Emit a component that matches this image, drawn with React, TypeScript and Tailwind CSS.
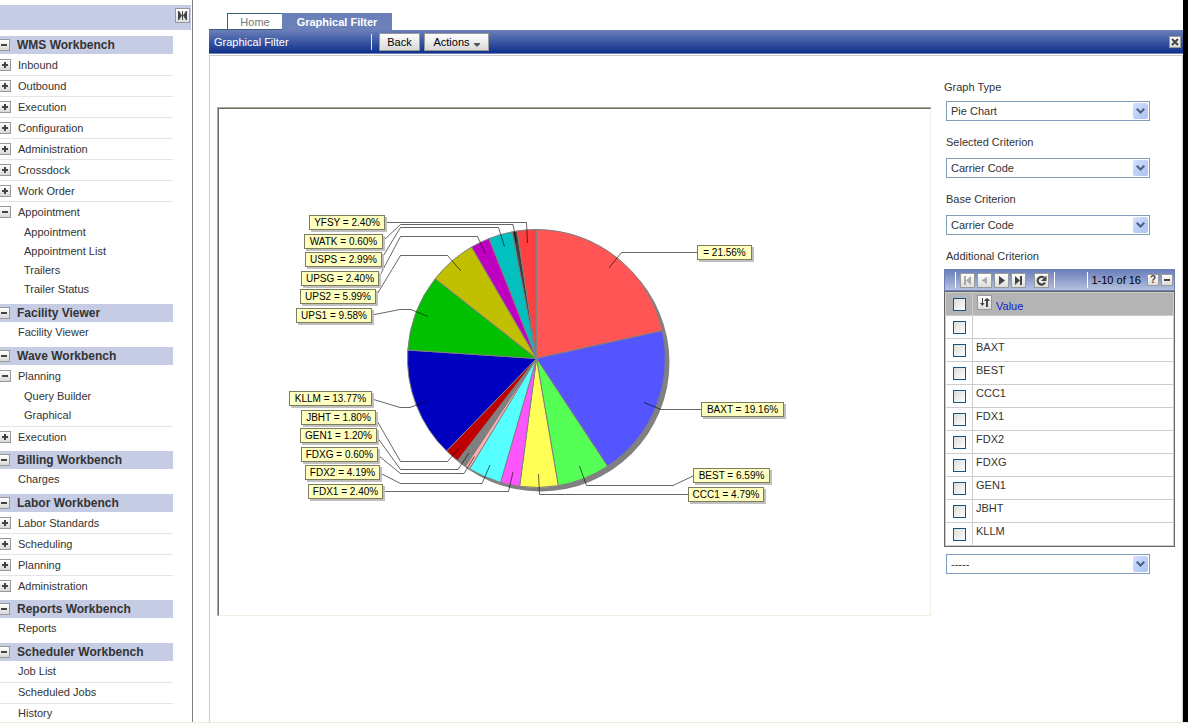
import React, { useState } from "react";
import clsx from "clsx";

type NavItem = { label: string; leaf?: boolean; children?: string[] };
type NavSection = { title: string; items: NavItem[] };

const sections: NavSection[] = [
  {
    title: "WMS Workbench",
    items: [
      { label: "Inbound" },
      { label: "Outbound" },
      { label: "Execution" },
      { label: "Configuration" },
      { label: "Administration" },
      { label: "Crossdock" },
      { label: "Work Order" },
      {
        label: "Appointment",
        children: ["Appointment", "Appointment List", "Trailers", "Trailer Status"],
      },
    ],
  },
  { title: "Facility Viewer", items: [{ label: "Facility Viewer", leaf: true }] },
  {
    title: "Wave Workbench",
    items: [
      { label: "Planning", children: ["Query Builder", "Graphical"] },
      { label: "Execution" },
    ],
  },
  { title: "Billing Workbench", items: [{ label: "Charges", leaf: true }] },
  {
    title: "Labor Workbench",
    items: [
      { label: "Labor Standards" },
      { label: "Scheduling" },
      { label: "Planning" },
      { label: "Administration" },
    ],
  },
  { title: "Reports Workbench", items: [{ label: "Reports", leaf: true }] },
  {
    title: "Scheduler Workbench",
    items: [
      { label: "Job List", leaf: true },
      { label: "Scheduled Jobs", leaf: true },
      { label: "History", leaf: true },
    ],
  },
];

type Slice = {
  name: string;
  pct: number;
  color: string;
  // label box: x, y, width
  box: [number, number, number];
  line: string;
};

const slices: Slice[] = [
  { name: "", pct: 21.56, color: "#ff5555", box: [697, 245, 55], line: "609,268 621.5,252.5 697,252.5" },
  { name: "BAXT", pct: 19.16, color: "#5555ff", box: [701, 402, 83], line: "644,402.5 661,409.5 701,409.5" },
  { name: "BEST", pct: 6.59, color: "#55ff55", box: [693, 468, 77], line: "579.5,466 586.5,485.5 673,485.5 693,476" },
  { name: "CCC1", pct: 4.79, color: "#ffff55", box: [688, 487, 76], line: "538.5,474 539.5,494.5 688,494.5" },
  { name: "FDX1", pct: 2.4, color: "#ff55ff", box: [308, 484, 75], line: "513,472 508.5,491.5 383,491.5" },
  { name: "FDX2", pct: 4.19, color: "#55ffff", box: [305, 465, 75], line: "490,465 482,483.5 400.5,483.5 380,473" },
  { name: "FDXG", pct: 0.6, color: "#ffafaf", box: [301, 447, 77], line: "474.5,456.5 464,473.5 400.5,473.5 379,456" },
  { name: "GEN1", pct: 1.2, color: "#808080", box: [300, 428, 77], line: "469,453 458,469.5 400.5,469.5 377,437" },
  { name: "JBHT", pct: 1.8, color: "#c00000", box: [301, 410, 75], line: "461,446 447.5,461.5 400.5,461.5 376,419" },
  { name: "KLLM", pct: 13.77, color: "#0000c0", box: [289, 391, 83], line: "428,400.5 410,407.5 400,407.5 372,399" },
  { name: "UPS1", pct: 9.58, color: "#00c000", box: [296, 308, 76], line: "428,316.5 411,309.5 400,309.5 372,315" },
  { name: "UPS2", pct: 5.99, color: "#c0c000", box: [300, 289, 76], line: "461,271 447.5,255.5 400.5,255.5 376,296" },
  { name: "UPSG", pct: 2.4, color: "#c000c0", box: [301, 271, 78], line: "485.5,253.5 477.5,236.5 400.5,236.5 379,277" },
  { name: "USPS", pct: 2.99, color: "#00c0c0", box: [305, 252, 77], line: "504.5,246.5 498.5,227.5 400.5,227.5 382,258" },
  { name: "WATK", pct: 0.6, color: "#404040", box: [304, 234, 79], line: "516.5,243 513,224.5 400.5,224.5 384,240" },
  { name: "YFSY", pct: 2.4, color: "#ff4040", box: [309, 215, 76], line: "527.5,243 526.5,222.5 385,222.5" },
];

const CX = 536.5;
const CY = 358.5;
const R = 129;

const point = (pct: number) => {
  const a = (pct / 100) * Math.PI * 2 - Math.PI / 2;
  return `${(CX + R * Math.cos(a)).toFixed(2)} ${(CY + R * Math.sin(a)).toFixed(2)}`;
};

const PieChart: React.FC = () => {
  const total = slices.reduce((sum, s) => sum + s.pct, 0);
  let acc = 0;
  const wedges = slices.map((s) => {
    const start = (acc / total) * 100;
    acc += s.pct;
    const end = (acc / total) * 100;
    return {
      color: s.color,
      d: `M${CX} ${CY} L${point(start)} A${R} ${R} 0 0 1 ${point(end)} Z`,
    };
  });

  return (
    <svg viewBox="219 109 711 506" className="block w-full" role="img" aria-label="Carrier Code">
      <circle cx={CX + 4} cy={CY + 4} r={R} fill="#808080" />
      {wedges.map((w) => (
        <path key={w.d} d={w.d} fill={w.color} stroke="#808080" strokeWidth={1} strokeLinejoin="round" />
      ))}
      {slices.map((s) => (
        <polyline key={s.name} points={s.line} fill="none" stroke="#000" strokeOpacity={0.6} strokeWidth={1} />
      ))}
      {slices.map((s) => {
        const [x, y, w] = s.box;
        return (
          <g key={s.name}>
            <rect x={x + 2} y={y + 2} width={w} height={15} fill="#c0c0c0" />
            <rect x={x + 0.5} y={y + 0.5} width={w - 1} height={14} fill="#ffffc0" stroke="#7d7d5e" />
            <text
              x={x + w / 2}
              y={y + 11}
              textAnchor="middle"
              fill="#000"
              className="font-['Liberation_Sans',sans-serif] text-[10px]"
            >
              {`${s.name} = ${s.pct.toFixed(2)}%`}
            </text>
          </g>
        );
      })}
    </svg>
  );
};

const Toggle: React.FC<{ open: boolean; label: string; className?: string }> = ({ open, label, className }) => (
  <button
    type="button"
    aria-label={label}
    className={clsx(
      "flex size-3 shrink-0 items-center justify-center border border-[#999] bg-linear-to-b from-white to-[#d8d8d8]",
      className
    )}
  >
    <svg viewBox="0 0 6 6" className="size-1.5 fill-[#444]">
      <rect x="0" y="2" width="6" height="2" />
      {!open && <rect x="2" y="0" width="2" height="6" />}
    </svg>
  </button>
);

const IconButton: React.FC<{
  label: string;
  small?: boolean;
  disabled?: boolean;
  children: React.ReactNode;
}> = ({ label, small, disabled, children }) => (
  <button
    type="button"
    aria-label={label}
    disabled={disabled}
    className={clsx(
      "flex shrink-0 items-center justify-center border border-[#999] bg-linear-to-b from-white to-[#dcdcdc]",
      small ? "size-3" : "size-[15px]",
      disabled ? "text-[#aaa]" : "text-[#444]"
    )}
  >
    {children}
  </button>
);

const Sidebar: React.FC = () => (
  <aside className="w-[193px] shrink-0 overflow-hidden border-r border-[#808080] pt-[5px]">
    <div className="mr-px mb-1.5 flex h-[25px] items-start justify-end bg-[#c5cce4] pt-[3px] pr-px">
      <IconButton label="Collapse menu">
        <svg viewBox="0 0 11 11" className="size-[11px] shrink-0 fill-current">
          <path d="M1 1h1l3 4.500-3 4.500H1z" />
          <rect x="5" y="1" width="1" height="9" />
          <path d="M10 1H9L6 5.500l3 4.500h1z" />
        </svg>
      </IconButton>
    </div>
    <nav className="mr-[19px]">
      {sections.map((section) => (
        <section key={section.title} className="mb-1">
          <h2 className="flex h-[18px] items-center bg-[#c5cce4] text-xs font-bold">
            <Toggle open label={section.title} className="-ml-0.5 mr-[7px]" />
            {section.title}
          </h2>
          <ul className="mt-px">
            {section.items.map((item) => (
              <li key={item.label} className="border-b border-[#e4e4e4] last:border-b-0">
                <div className="flex h-5 items-center">
                  {item.leaf ? (
                    <a href="#" className="ml-[18px] pb-0.5">
                      {item.label}
                    </a>
                  ) : (
                    <>
                      <Toggle open={!!item.children} label={`Toggle ${item.label}`} className="-ml-px mr-[7px]" />
                      <a href="#">{item.label}</a>
                    </>
                  )}
                </div>
                {item.children && (
                  <ul className="pb-0.5 pl-6">
                    {item.children.map((child) => (
                      <li key={child} className="flex h-[19px] items-center">
                        <a href="#">{child}</a>
                      </li>
                    ))}
                  </ul>
                )}
              </li>
            ))}
          </ul>
        </section>
      ))}
    </nav>
  </aside>
);

const Dropdown: React.FC<{ id: string; options: string[]; ariaLabel?: string }> = ({ id, options, ariaLabel }) => (
  <div className="relative ml-0.5 w-[204px]">
    <select
      id={id}
      aria-label={ariaLabel}
      className="block h-5 w-full appearance-none border border-[#7f9db9] bg-white pl-1 pr-5 outline-none"
    >
      {options.map((o) => (
        <option key={o}>{o}</option>
      ))}
    </select>
    <span className="pointer-events-none absolute inset-y-0.5 right-0.5 flex w-[15px] items-center justify-center rounded-xs bg-linear-to-br from-[#d5e0fd] to-[#a9c1f5]">
      <svg viewBox="0 0 9 6" className="h-1.5 w-[9px] fill-[#4d6185]">
        <path d="M0 1.500L1.500 0l3 3 3-3L9 1.500 4.500 6z" />
      </svg>
    </span>
  </div>
);

const checkboxClass =
  "block size-[13px] appearance-none border border-[#1c5180] bg-linear-to-br from-[#dcdcd7] to-white checked:from-[#21a121] checked:to-[#21a121]";

const values = ["", "BAXT", "BEST", "CCC1", "FDX1", "FDX2", "FDXG", "GEN1", "JBHT", "KLLM"];

const CriterionTable: React.FC = () => {
  const [selected, setSelected] = useState<string[]>([]);

  const toggle = (v: string) =>
    setSelected((prev) => (prev.includes(v) ? prev.filter((p) => p !== v) : [...prev, v]));

  return (
    <div>
      {/* Pager */}
      <div className="flex h-[22px] items-center border border-[#6b7fb9] bg-linear-to-b from-[#6b7fb9] to-[#b6c1e0] pr-px pl-2.5 text-black">
        <span className="mr-1 h-4 w-px bg-white" />
        <div className="flex gap-0.5">
          <IconButton label="First page" disabled>
            <svg viewBox="0 0 9 9" className="size-[9px] fill-current">
              <path d="M1 0h2v9H1zM8 0v9L3 4.500z" />
            </svg>
          </IconButton>
          <IconButton label="Previous page" disabled>
            <svg viewBox="0 0 9 9" className="size-[9px] fill-current">
              <path d="M7 1v7L1.500 4.500z" />
            </svg>
          </IconButton>
          <IconButton label="Next page">
            <svg viewBox="0 0 9 9" className="size-[9px] fill-current">
              <path d="M2 0v9l6-4.500z" />
            </svg>
          </IconButton>
          <IconButton label="Last page">
            <svg viewBox="0 0 9 9" className="size-[9px] fill-current">
              <path d="M1 0v9l5-4.500zM6 0h2v9H6z" />
            </svg>
          </IconButton>
        </div>
        <span className="ml-2">
          <IconButton label="Refresh">
            <svg viewBox="0 0 11 11" className="size-[11px] shrink-0">
              <path d="M9 7.500A3.900 3.900 0 1 1 8 2.600" fill="none" stroke="currentColor" strokeWidth="2.200" />
              <path d="M10.500 0.500v5.500H5z" fill="currentColor" />
            </svg>
          </IconButton>
        </span>
        <span className="ml-[5px] h-4 w-px bg-white" />
        <span className="mr-[3px] ml-auto h-4 w-px bg-white" />
        <span className="mr-1.5">1-10 of 16</span>
        <div className="flex gap-0.5">
          <IconButton label="Help" small>
            <span className="text-[10px] leading-none font-bold">?</span>
          </IconButton>
          <IconButton label="Minimize" small>
            <svg viewBox="0 0 6 6" className="size-1.5 fill-current">
              <rect x="0" y="2" width="6" height="2" />
            </svg>
          </IconButton>
        </div>
      </div>

      <div className="border border-[#666]">
        <table className="w-full border-collapse border border-[#ccc]">
          <thead>
            <tr className="h-[23px] bg-[#b4b4b4]">
              <th className="w-[27px] border border-[#ccc] pl-[7px]">
                <input type="checkbox" aria-label="Select all" className={checkboxClass} />
              </th>
              <th className="border border-[#ccc] p-0 pl-1 text-left font-normal">
                <div className="flex items-start gap-1">
                  <IconButton label="Sort">
                    <svg viewBox="0 0 11 11" className="size-[11px] shrink-0 fill-current">
                      <path d="M3 1h1v5h1.500L3.500 9 1 6h2z" />
                      <path d="M7 10h2V4h1.500V3L8 1 5.500 3v1H7z" />
                    </svg>
                  </IconButton>
                  <a href="#" className="pt-1 leading-[14px] text-[#1022cc]">
                    Value
                  </a>
                </div>
              </th>
            </tr>
          </thead>
          <tbody>
            {values.map((v) => (
              <tr key={v} className="h-[23px]">
                <td className="border border-[#ccc] pl-[7px]">
                  <input
                    type="checkbox"
                    id={`value-${v}`}
                    aria-label={v || "Blank value"}
                    checked={selected.includes(v)}
                    onChange={() => toggle(v)}
                    className={checkboxClass}
                  />
                </td>
                <td className="border border-[#ccc] pl-[3px] align-top leading-4">
                  <label htmlFor={`value-${v}`}>{v}</label>
                </td>
              </tr>
            ))}
          </tbody>
        </table>
      </div>
    </div>
  );
};

const App: React.FC = () => (
  <div className="flex h-screen overflow-hidden border-b border-[#ece9d8] bg-white font-['Liberation_Sans',Arial,sans-serif] text-[11px] leading-4 text-[#333]">
    <Sidebar />

    <main className="ml-4 flex min-w-0 flex-1 flex-col pt-[13px]">
      {/* Tabs */}
      <div className="flex h-[17px] shrink-0">
        <span className="w-[18px] border-b border-[#3a617c]" />
        <a
          href="#"
          className="flex w-[55px] items-center justify-center border border-r-0 border-[#3a617c] text-[#777]"
        >
          Home
        </a>
        <a href="#" className="flex w-[110px] items-center justify-center bg-[#6b7fb9] font-bold text-white">
          Graphical Filter
        </a>
      </div>

      {/* Title bar */}
      <div className="mb-px flex h-6 shrink-0 items-center border-b border-[#6b7fb9] bg-linear-to-b from-[#6b7fb9] to-[#0f2f8a] pr-0.5 pl-[5px]">
        <h1 className="w-[157px] text-white">Graphical Filter</h1>
        <span className="mr-[7px] h-4 w-px bg-[#e8e8e8]" />
        <button
          type="button"
          className="mr-1 h-[18px] w-[41px] border border-[#999] bg-linear-to-b from-white to-[#d8d8d8] text-black"
        >
          Back
        </button>
        <button
          type="button"
          className="flex h-[18px] w-[65px] items-center justify-center gap-1 border border-[#999] bg-linear-to-b from-white to-[#d8d8d8] text-black"
        >
          Actions
          <svg viewBox="0 0 6 4" className="mt-1.5 h-1 w-1.5 fill-[#555]">
            <path d="M0 0h6v1L3 4 0 1z" />
          </svg>
        </button>
        <span className="ml-auto">
          <IconButton label="Close" small>
            <svg viewBox="0 0 8 8" className="size-2 fill-none stroke-current stroke-2">
              <path d="M1 1l6 6M7 1L1 7" />
            </svg>
          </IconButton>
        </span>
      </div>

      <div className="flex flex-1 items-start gap-[13px] border border-b-0 border-[#ccc] px-[7px]">
        {/* Chart frame */}
        <div className="mt-[51px] min-w-0 flex-1 border-t border-l border-[#aca899]">
          <div className="border border-t-[#716f64] border-r-[#f1efe2] border-b-[#f1efe2] border-l-[#716f64]">
            <PieChart />
          </div>
        </div>

        {/* Filters */}
        <div className="flex w-[231px] shrink-0 flex-col pt-[23px]">
          <label htmlFor="graph-type" className="mb-1.5">
            Graph Type
          </label>
          <Dropdown id="graph-type" options={["Pie Chart", "Bar Chart"]} />
          <label htmlFor="selected-criterion" className="mt-[13px] mb-2 ml-0.5">
            Selected Criterion
          </label>
          <Dropdown id="selected-criterion" options={["Carrier Code"]} />
          <label htmlFor="base-criterion" className="mt-[13px] mb-2 ml-0.5">
            Base Criterion
          </label>
          <Dropdown id="base-criterion" options={["Carrier Code"]} />
          <span className="mt-[13px] mb-[5px] ml-0.5">Additional Criterion</span>
          <CriterionTable />
          <div className="mt-[7px]">
            <Dropdown id="additional" ariaLabel="Additional criterion action" options={["-----"]} />
          </div>
        </div>
      </div>
    </main>

    <div className="w-[5px] shrink-0 bg-black" />
  </div>
);

export default App;
